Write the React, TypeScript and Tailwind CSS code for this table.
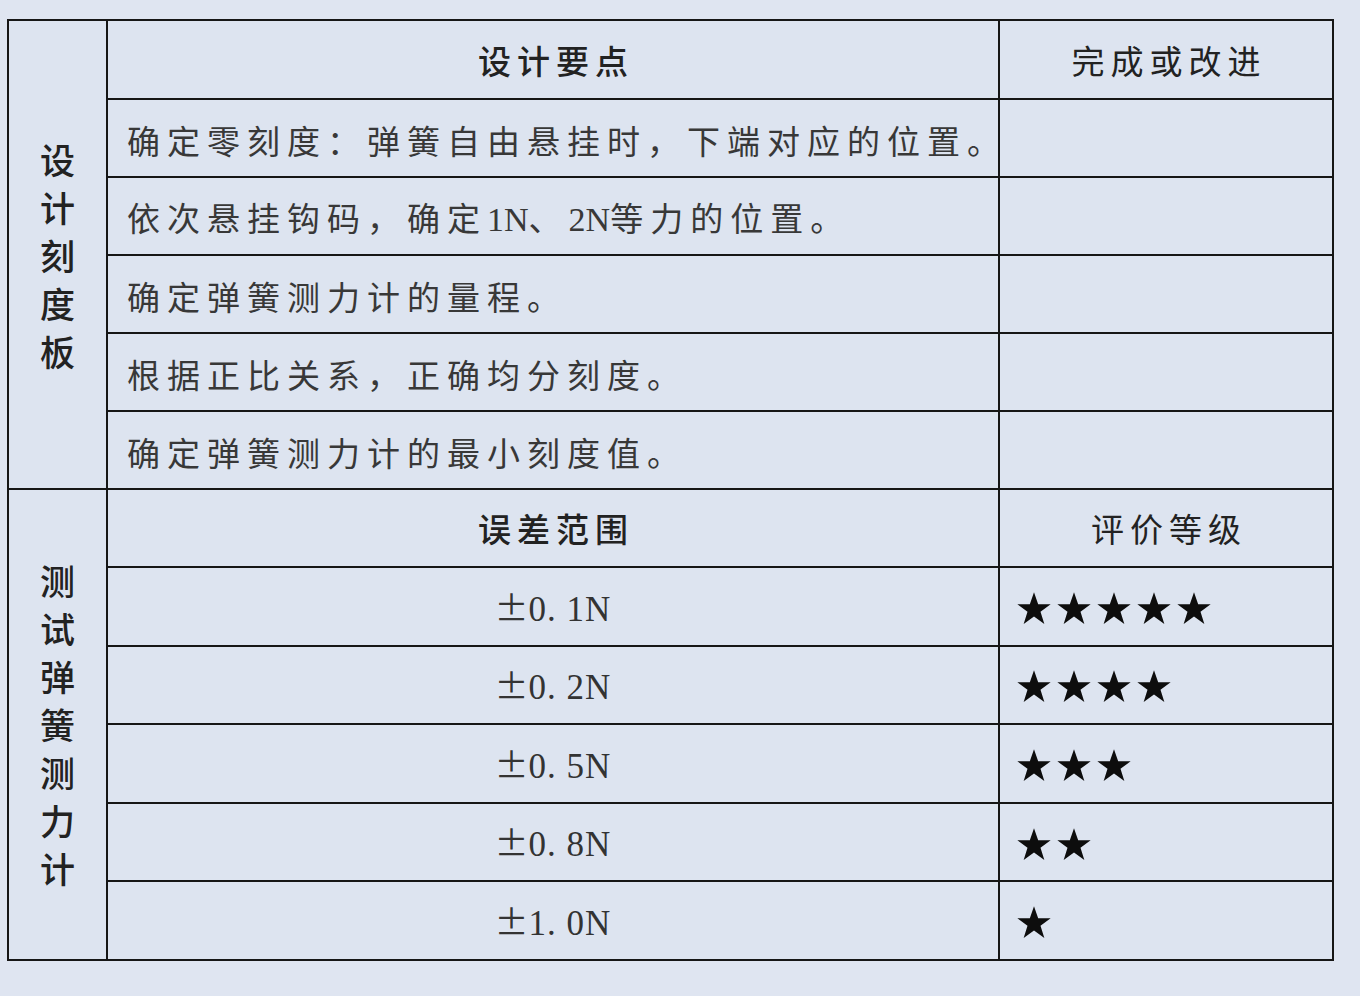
import React from 'react';

const CJK = '"Noto Sans CJK SC", "Noto Sans", sans-serif';
const SERIF = '"Liberation Serif", "Noto Sans CJK SC", serif';

const designRows = [
  '确定零刻度：弹簧自由悬挂时，下端对应的位置。',
  '依次悬挂钩码，确定1N、2N等力的位置。',
  '确定弹簧测力计的量程。',
  '根据正比关系，正确均分刻度。',
  '确定弹簧测力计的最小刻度值。',
];

const testRows = [
  { range: '0. 1N', stars: 5 },
  { range: '0. 2N', stars: 4 },
  { range: '0. 5N', stars: 3 },
  { range: '0. 8N', stars: 2 },
  { range: '1. 0N', stars: 1 },
];

// mixes CJK glyphs with serif latin digits, like the original doc
const MixedText: React.FC<{ text: string }> = ({ text }) => {
  const parts = text.split(/([0-9A-Za-z.]+)/);
  return (
    <>
      {parts.map((p, i) =>
        /^[0-9A-Za-z.]+$/.test(p) ? (
          <span key={i} style={{ fontFamily: SERIF }} className="text-[34px] tracking-[0px]">
            {p}
          </span>
        ) : (
          <span key={i}>{p}</span>
        )
      )}
    </>
  );
};

const Star = () => (
  <svg width="40" height="40" viewBox="0 0 24 24" className="shrink-0">
    <polygon
      points="12,2 14.5,9.2 22,9.2 15.9,13.6 18.2,21 12,16.5 5.8,21 8.1,13.6 2,9.2 9.5,9.2"
      fill="#0d0d0d"
    />
  </svg>
);

const VerticalLabel: React.FC<{ text: string }> = ({ text }) => (
  <div className="flex flex-col items-center">
    {text.split('').map((c, i) => (
      <span key={i} className="text-[35px] leading-[48px] font-medium text-[#222]">
        {c}
      </span>
    ))}
  </div>
);

const cell = 'border-[2.5px] border-[#161616]';

export default function App() {
  return (
    <div className="w-[1360px] h-[996px] bg-[#dfe5f1] pt-[19px] pl-[7px]" style={{ fontFamily: CJK }}>
      <table className="table-fixed border-collapse bg-[#dde4f0] w-[1325px]">
        <colgroup>
          <col className="w-[99px]" />
          <col className="w-[892px]" />
          <col className="w-[334px]" />
        </colgroup>
        <tbody>
          <tr className="h-[79px]">
            <td rowSpan={6} className={`${cell} align-middle`}>
              <VerticalLabel text="设计刻度板" />
            </td>
            <td className={`${cell} text-center text-[33px] font-medium tracking-[6px] text-[#222] pl-[6px] pt-[2px]`}>
              设计要点
            </td>
            <td className={`${cell} text-center text-[33px] tracking-[6px] text-[#222] pl-[6px] pt-[2px]`}>
              完成或改进
            </td>
          </tr>
          {designRows.map((t) => (
            <tr key={t} className="h-[78px]">
              <td className={`${cell} pl-[19px] pt-[5px] text-[33px] tracking-[7px] text-[#383838] whitespace-nowrap`}>
                <MixedText text={t} />
              </td>
              <td className={cell}></td>
            </tr>
          ))}

          <tr className="h-[78px]">
            <td rowSpan={6} className={`${cell} align-middle`}>
              <VerticalLabel text="测试弹簧测力计" />
            </td>
            <td className={`${cell} text-center text-[33px] font-medium tracking-[6px] text-[#222] pl-[6px] pt-[2px]`}>
              误差范围
            </td>
            <td className={`${cell} text-center text-[33px] tracking-[6px] text-[#222] pl-[6px] pt-[2px]`}>
              评价等级
            </td>
          </tr>
          {testRows.map((r) => (
            <tr key={r.range} className="h-[78.6px]">
              <td className={`${cell} text-center pt-[4px]`}>
                <span className="text-[34px] text-[#333]">±</span>
                <span style={{ fontFamily: SERIF }} className="text-[35px] text-[#333] tracking-[1px]">
                  {r.range}
                </span>
              </td>
              <td className={`${cell} pl-[14px] pt-[5px]`}>
                <div className="flex gap-0">
                  {Array.from({ length: r.stars }).map((_, i) => (
                    <Star key={i} />
                  ))}
                </div>
              </td>
            </tr>
          ))}
        </tbody>
      </table>
    </div>
  );
}
